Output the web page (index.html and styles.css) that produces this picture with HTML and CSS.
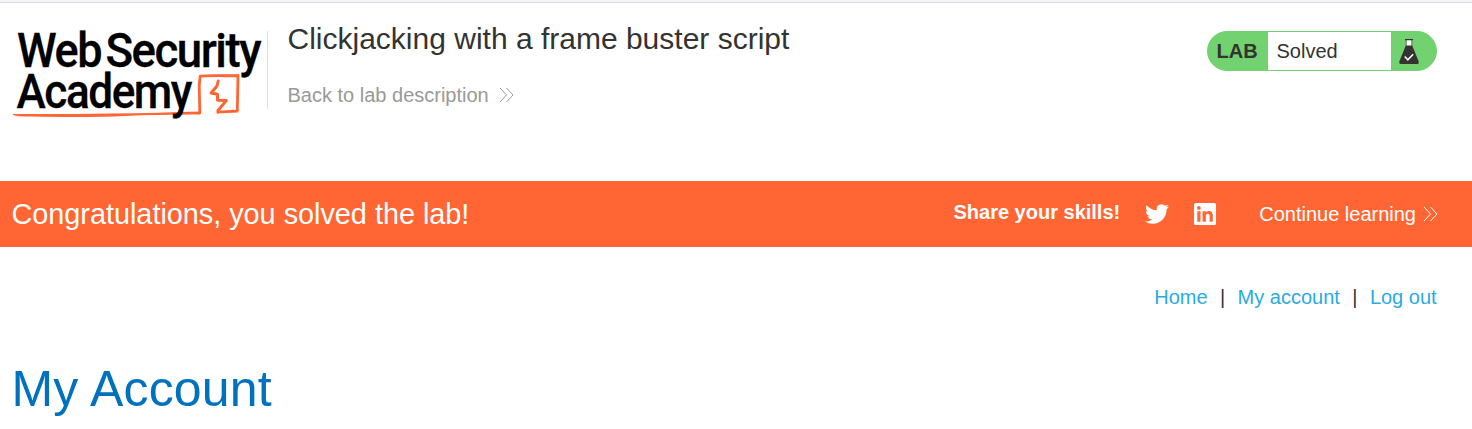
FILE: index.html
```html
<!DOCTYPE html>
<html lang="en">
<head>
<meta charset="utf-8">
<title>Clickjacking with a frame buster script</title>
<link rel="stylesheet" href="styles.css">
</head>
<body>
<header class="lab-header">
  <svg class="logo" viewBox="12 20 255 100" role="img" aria-label="Web Security Academy">
    <g class="logo-mark">
      <path class="logo-fill" d="M13 114Q60 114.400 110 113.500T200 111.400V114.500Q160 114.300 125 116T30 116.500Q18 116.500 13 115z"/>
      <path d="M199.800 113L199.200 85L200.200 76.200C212 75 225 76.300 238 75.500L237.300 111C231 111.700 224 111.600 218 112.200"/>
      <path class="logo-bolt" d="M218.200 81L217 86L211 93L217.500 94.200L217.500 100.300L226.300 100.600L218 110.500V112"/>
    </g>
    <g class="logo-text">
      <text x="17" y="67.300" textLength="84" lengthAdjust="spacingAndGlyphs">Web</text>
      <text x="105.500" y="67.300" textLength="154.500" lengthAdjust="spacingAndGlyphs">Security</text>
      <text x="16.500" y="108" textLength="174.500" lengthAdjust="spacingAndGlyphs">Academy</text>
    </g>
  </svg>
  <div class="title-block">
    <h2 class="title">Clickjacking with a frame buster script</h2>
    <a class="back">Back to lab description
      <svg class="chevrons" viewBox="0 0 15 16"><path d="M1 1l6.500 7L1 15M7.500 1l6.500 7-6.500 7"/></svg>
    </a>
  </div>
  <div class="status">
    <span class="status-tag">LAB</span>
    <span class="status-text">Solved</span>
    <span class="status-icon">
      <svg class="flask" viewBox="0 0 20 26">
        <path class="flask-body" d="M6 0h8v1.300h-.8V6.500L19.500 22q1 3-1.500 3H2q-2.500 0-1.500-3L6.800 6.500V1.300H6z"/>
        <path class="flask-neck" d="M7.500 1.300h5V6.500h-5z"/>
        <path class="flask-check" d="M5.800 17.600l3 3.200 5.400-5.600"/>
      </svg>
    </span>
  </div>
</header>
<section class="banner">
  <h4 class="banner-title">Congratulations, you solved the lab!</h4>
  <span class="share">Share your skills!</span>
  <svg class="social twitter" viewBox="0 0 24 24"><path d="M23.950 4.570a10 10 0 01-2.820.775 4.960 4.960 0 002.160-2.723c-.951.555-2.005.959-3.127 1.184a4.920 4.920 0 00-8.384 4.482C7.690 8.095 4.067 6.130 1.640 3.162a4.820 4.820 0 00-.666 2.475c0 1.710.87 3.213 2.188 4.096a4.900 4.900 0 01-2.228-.616v.06a4.920 4.920 0 003.946 4.827 5 5 0 01-2.212.085 4.940 4.940 0 004.604 3.417 9.870 9.870 0 01-6.102 2.105c-.39 0-.779-.023-1.170-.067a14 14 0 007.557 2.209c9.053 0 13.998-7.496 13.998-13.985 0-.21 0-.42-.015-.63a9.940 9.940 0 002.460-2.548z"/></svg>
  <svg class="social linkedin" viewBox="0 0 24 24"><path fill-rule="evenodd" d="M1.800 0h20.400Q24 0 24 1.700v20.600q0 1.700-1.800 1.700H1.800Q0 24 0 22.300V1.700Q0 0 1.800 0zM3.600 9v11.500h3.500V9zM5.300 3.300a2.050 2.050 0 100 4.100 2.050 2.050 0 000-4.100zM9.300 9v11.500h3.600v-5.700c0-1.500.3-3 2.200-3 1.800 0 1.900 1.700 1.900 3.100v5.600h3.500v-6.300c0-3.100-.7-5.500-4.300-5.500-1.700 0-2.900.95-3.400 1.850V9z"/></svg>
  <a class="continue">Continue learning
    <svg class="chevrons" viewBox="0 0 15 16"><path d="M1 1l6.500 7L1 15M7.500 1l6.500 7-6.500 7"/></svg>
  </a>
</section>
<nav class="links">
  <a class="link">Home</a><span class="sep">|</span><a class="link">My account</a><span class="sep">|</span><a class="link">Log out</a>
</nav>
<h1 class="page-title">My Account</h1>
</body>
</html>
```
FILE: styles.css
```css
* { box-sizing: border-box; }
body {
  margin: 0;
  height: 429px;
  overflow: hidden;
  background: #fff;
  color: #333332;
  font-family: "Liberation Sans", Arial, sans-serif;
  font-size: 20px;
  line-height: 24px;
  border-top: 2px solid #f4f5f7;
}
h1, h2, h4 { margin: 0; font-weight: 400; }
.lab-header {
  display: flex;
  align-items: flex-start;
  height: 179px;
  padding: 17px 35px 0 12px;
  border-top: 1px solid #dadce0;
}
.logo { width: 255px; height: 100px; flex: none; }
.logo-text { font-family: Roboto, sans-serif; font-weight: 500; font-size: 48.500px; letter-spacing: -1.600px; fill: #000; stroke: #000; stroke-width: 0.300; }
.logo-mark { fill: none; stroke: #ff6633; stroke-width: 2.800; stroke-linejoin: round; stroke-linecap: round; }
.logo-fill { fill: #ff6633; stroke: none; }
.logo-bolt { stroke-width: 3; }
.title-block {
  height: 78px;
  margin-top: 11px;
  padding-left: 20px;
  border-left: 1px solid #e0e0e0;
  flex: 1;
}
.title { font-size: 30px; line-height: 34px; margin: -9px 0 0 -0.500px; white-space: nowrap; }
.back { display: flex; align-items: center; gap: 10.500px; margin: 27px 0 0 -0.500px; color: #999; }
.chevrons { width: 15px; height: 16px; fill: none; stroke: currentColor; stroke-width: 1; }
.status {
  display: flex;
  width: 230px;
  height: 40px;
  margin-top: 11px;
  border: 1px solid #72d26f;
  border-radius: 20px;
  background: #72d26f;
  overflow: hidden;
  line-height: 39px;
}
.status-tag { width: 60px; padding-left: 8.500px; font-weight: 700; }
.status-text { width: 123px; padding-left: 8.500px; background: #fff; }
.status-icon { padding: 7px 0 0 8px; line-height: 0; }
.flask { width: 20px; height: 26px; }
.flask-body { fill: #333332; }
.flask-neck { fill: #fff; }
.flask-check { fill: none; stroke: #fff; stroke-width: 1.500; }
.banner {
  display: flex;
  align-items: center;
  height: 66px;
  padding: 0 34.500px 0 11.500px;
  background: #ff6633;
  color: #fff;
}
.banner-title { font-size: 28.800px; margin-right: auto; }
.share { font-weight: 700; margin: 0 25px 4px 0; }
.social { width: 24px; height: 24px; fill: #fff; }
.twitter { margin-right: 25px; }
.linkedin { width: 22px; height: 22px; margin-right: 43px; }
.continue { display: flex; align-items: center; gap: 6.500px; }
.links { display: flex; justify-content: flex-end; padding: 38px 35.400px 0 0; }
.link { color: #29abe2; }
.sep { width: 30px; text-align: center; }
.page-title { margin: 48px 0 0 11.500px; font-size: 50px; line-height: 64px; letter-spacing: 0.200px; color: #0071bc; }
```
